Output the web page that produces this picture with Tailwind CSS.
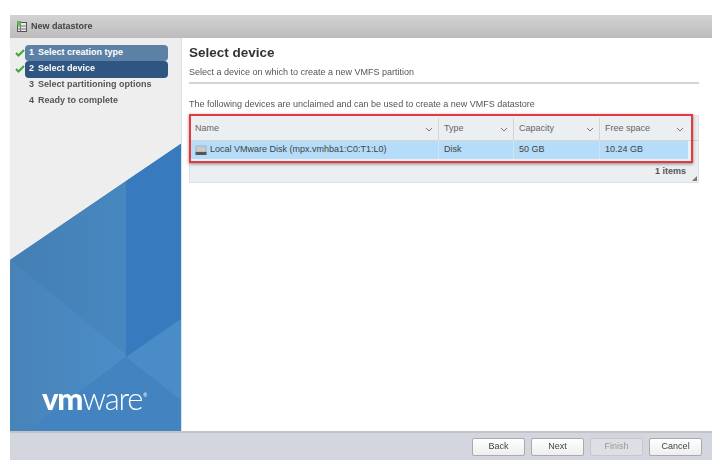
<!DOCTYPE html>
<html lang="en">
<head>
<meta charset="UTF-8" />
<title>New datastore</title>
<script src="https://cdn.jsdelivr.net/npm/@tailwindcss/browser@4"></script>
</head>
<body class="h-[471px] w-[722px] overflow-hidden bg-white font-['Liberation_Sans',Arial,sans-serif] text-[#444]">
<div class="pl-[10px] pr-[10px] pt-[15px] blur-[0.35px]">
  <div class="flex h-[445px] w-[702px] flex-col">
    <!-- title bar -->
    <div class="flex h-[23px] shrink-0 items-center gap-[4px] bg-gradient-to-b from-[#d3d3d3] to-[#bcbcbc] pl-[7px]">
      <svg width="10" height="11" viewBox="0 0 10 11">
        <rect x="0.5" y="1.5" width="9" height="9" fill="#e8e8e8" stroke="#555" />
        <path d="M0.5 5h9M0.5 8h9M3.5 2v8" stroke="#777" fill="none" />
        <rect x="0" y="0" width="4" height="4" fill="#58b947" />
      </svg>
      <span class="text-[9px] font-bold text-[#444]">New datastore</span>
    </div>

    <div class="flex min-h-0 flex-1">
      <!-- wizard steps -->
      <div class="relative w-[172px] shrink-0 overflow-hidden border-r border-[#d5e3ef] bg-[#eeeeee]">
        <svg class="absolute inset-0" width="172" height="394" viewBox="0 0 172 394">
          <defs>
            <linearGradient id="leftShade" x1="0" y1="0" x2="1" y2="0">
              <stop offset="0" stop-color="#447fb3" />
              <stop offset="1" stop-color="#4787c0" />
            </linearGradient>
            <linearGradient id="lowShade" x1="0" y1="0" x2="1" y2="0">
              <stop offset="0" stop-color="#4883b8" />
              <stop offset="1" stop-color="#4b8ec8" />
            </linearGradient>
          </defs>
          <polygon points="0,222 172,105 172,394 0,394" fill="#4a8cc8" />
          <polygon points="0,222 116,143 116,317" fill="url(#leftShade)" />
          <polygon points="0,222 116,317 15,394 0,394" fill="url(#lowShade)" />
          <polygon points="116,143 172,105 172,280 116,319" fill="#377abd" />
          <polygon points="116,319 15,394 172,394 172,363" fill="#4283c0" />
        </svg>
        <ul class="relative flex flex-col pt-[7px] text-[9px] font-bold">
          <li class="flex h-[16px] items-center">
            <svg class="ml-[5px] w-[10px]" height="8" viewBox="0 0 10 8"><path d="M1 4l2.5 2.5L9 1" fill="none" stroke="#3fa83a" stroke-width="2" /></svg>
            <span class="flex h-[16px] w-[143px] items-center rounded-[4px] bg-[#5b81a6] pl-[4px] text-white"><span class="w-[9px]">1</span>Select creation type</span>
          </li>
          <li class="flex h-[16px] items-center">
            <svg class="ml-[5px] w-[10px]" height="8" viewBox="0 0 10 8"><path d="M1 4l2.5 2.5L9 1" fill="none" stroke="#3fa83a" stroke-width="2" /></svg>
            <span class="flex h-[17px] w-[143px] items-center rounded-[4px] bg-[#2f5581] pl-[4px] text-white"><span class="w-[9px]">2</span>Select device</span>
          </li>
          <li class="flex h-[16px] items-center pl-[19px] text-[#555]"><span class="w-[9px]">3</span>Select partitioning options</li>
          <li class="flex h-[16px] items-center pl-[19px] text-[#555]"><span class="w-[9px]">4</span>Ready to complete</li>
        </ul>
        <div class="absolute bottom-[8px] left-[32px] flex items-baseline font-['Lato',sans-serif] text-[31px] leading-[30px] tracking-[-1.2px] text-white">
          <span class="font-black">vm</span><span class="font-light">ware</span><span class="relative top-[-13px] left-[1px] text-[5px] tracking-normal">®</span>
        </div>
      </div>

      <!-- page -->
      <div class="flex min-w-0 flex-1 flex-col bg-white pl-[7px] pr-[18px] pt-[7px]">
        <h1 class="text-[13.5px] leading-[16px] font-bold text-[#333]">Select device</h1>
        <p class="mt-[6px] text-[9px] leading-[10px] text-[#555]">Select a device on which to create a new VMFS partition</p>
        <div class="mt-[5px] h-[2px] w-[510px] bg-[#d4d4d4]"></div>
        <p class="mt-[15px] text-[9px] leading-[10px] text-[#555]">The following devices are unclaimed and can be used to create a new VMFS datastore</p>

        <!-- device grid -->
        <div class="relative mt-[6px] h-[68px] w-[510px] border border-[#e0e0e0] bg-[#eceff1] text-[9px]">
          <div class="flex h-[25px] border-b border-[#d5d5d5] pt-[2px] text-[#666]">
            <div class="flex w-[249px] items-center justify-between border-r border-[#d5d5d5] pl-[5px] pr-[5px]">Name<svg width="8" height="5" viewBox="0 0 8 5"><path d="M1 1l3 3 3-3" fill="none" stroke="#777" /></svg></div>
            <div class="flex w-[75px] items-center justify-between border-r border-[#d5d5d5] pl-[5px] pr-[5px]">Type<svg width="8" height="5" viewBox="0 0 8 5"><path d="M1 1l3 3 3-3" fill="none" stroke="#777" /></svg></div>
            <div class="flex w-[86px] items-center justify-between border-r border-[#d5d5d5] pl-[5px] pr-[5px]">Capacity<svg width="8" height="5" viewBox="0 0 8 5"><path d="M1 1l3 3 3-3" fill="none" stroke="#777" /></svg></div>
            <div class="flex w-[90px] items-center justify-between pl-[5px] pr-[6px]">Free space<svg width="8" height="5" viewBox="0 0 8 5"><path d="M1 1l3 3 3-3" fill="none" stroke="#777" /></svg></div>
          </div>
          <div class="flex h-[18px] w-[498px] bg-[#b5dcf8] text-[#444]">
            <div class="flex w-[249px] items-center gap-[3px] border-r border-[#cfe3f0] pl-[5px]">
              <svg width="12" height="11" viewBox="0 0 12 11">
                <rect x="1" y="1" width="10" height="6" fill="#c9ccce" stroke="#9a9a9a" stroke-width="0.6" />
                <rect x="0.5" y="7" width="11" height="3" fill="#555" />
              </svg>
              <span>Local VMware Disk (mpx.vmhba1:C0:T1:L0)</span>
            </div>
            <div class="flex w-[75px] items-center border-r border-[#cfe3f0] pl-[5px]">Disk</div>
            <div class="flex w-[86px] items-center border-r border-[#cfe3f0] pl-[5px]">50 GB</div>
            <div class="flex items-center pl-[5px]">10.24 GB</div>
          </div>
          <div class="mt-[6px] pr-[12px] text-right font-bold text-[#555]">1 items</div>
          <svg class="absolute bottom-[1px] right-[1px]" width="5" height="5" viewBox="0 0 5 5"><path d="M5 0v5H0z" fill="#777" /></svg>
          <!-- red callout drawn over the screenshot -->
          <div class="absolute top-[-2px] left-[-1px] h-[49px] w-[504px] border-2 border-[#e8383f] shadow-[0_1px_3px_rgba(0,0,0,0.45)]"></div>
        </div>
      </div>
    </div>

    <!-- footer -->
    <div class="flex h-[29px] shrink-0 items-center justify-end gap-[6.25px] border-t-2 border-[#c4c4c4] bg-[#d3d6de] pr-[10px] text-[9px] text-[#444]">
      <button class="h-[18px] w-[52.75px] rounded-[2px] border border-[#aaa] bg-gradient-to-b from-white to-[#eeeeee]">Back</button>
      <button class="h-[18px] w-[52.75px] rounded-[2px] border border-[#aaa] bg-gradient-to-b from-white to-[#eeeeee]">Next</button>
      <button class="h-[18px] w-[52.75px] rounded-[2px] border border-[#c4c7cc] bg-[#dcdfe3] text-[#999]">Finish</button>
      <button class="h-[18px] w-[52.75px] rounded-[2px] border border-[#aaa] bg-gradient-to-b from-white to-[#eeeeee]">Cancel</button>
    </div>
  </div>
</div>
</body>
</html>
